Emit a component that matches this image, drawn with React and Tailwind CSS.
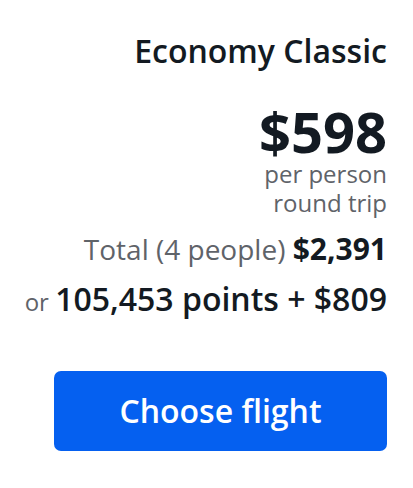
export default function App() {
  return (
    <div className="w-[413px] h-[488px] bg-white" style={{ fontFamily: '"Open Sans", sans-serif' }}>
      <div className="flex flex-col items-end pr-[26px] pl-[54px] pt-[31px] text-right">
        <div className="text-[32px] leading-[40px] font-semibold text-[#131a22] whitespace-nowrap">Economy Classic</div>
        <div className="mt-[32px] text-[56px] leading-[56px] font-bold text-[#131a22]">$598</div>
        <div className="text-[24px] leading-[29px] text-[#5f6369]">per person</div>
        <div className="text-[24px] leading-[29px] text-[#5f6369]">round trip</div>
        <div className="mt-[14px] text-[28px] leading-[36px] text-[#5f6369] whitespace-nowrap">
          Total (4 people) <span className="text-[30px] font-bold text-[#131a22]">$2,391</span>
        </div>
        <div className="mt-[12px] leading-[40px] text-[#131a22] whitespace-nowrap">
          <span className="text-[24px] text-[#5f6369]">or </span>
          <span className="text-[32px] font-semibold">105,453 points + $809</span>
        </div>
        <button className="mt-[46px] w-full h-[80px] rounded-[7px] bg-[#0560f0] text-white text-[32px] font-semibold">
          Choose flight
        </button>
      </div>
    </div>
  );
}
